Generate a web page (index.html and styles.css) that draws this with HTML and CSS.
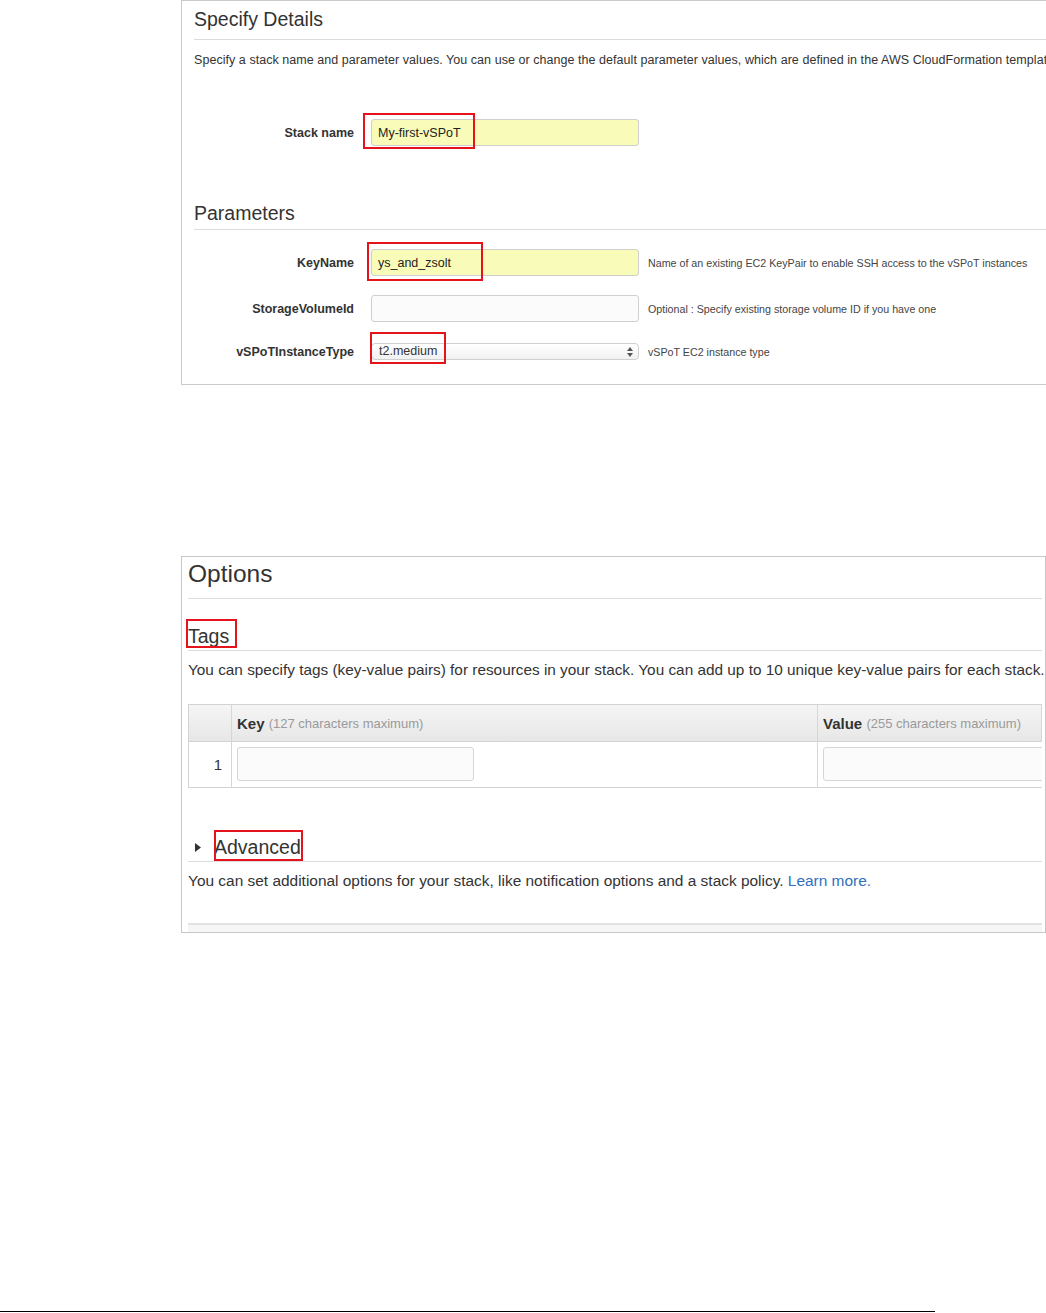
FILE: index.html
```html
<!DOCTYPE html>
<html>
<head>
<meta charset="utf-8">
<title>Stack details</title>
<link rel="stylesheet" href="styles.css">
</head>
<body>
<div class="page">
  <section class="panel details">
    <h2 class="panel-title">Specify Details</h2>
    <p class="desc">Specify a stack name and parameter values. You can use or change the default parameter values, which are defined in the AWS CloudFormation template.</p>
    <div class="row stack-row">
      <div class="label">Stack name</div>
      <div class="field yellow mark mark-stack">My-first-vSPoT</div>
    </div>
    <h2 class="panel-title params">Parameters</h2>
    <div class="row">
      <div class="label">KeyName</div>
      <div class="field yellow mark mark-key">ys_and_zsolt</div>
      <div class="help">Name of an existing EC2 KeyPair to enable SSH access to the vSPoT instances</div>
    </div>
    <div class="row">
      <div class="label">StorageVolumeId</div>
      <div class="field"></div>
      <div class="help">Optional : Specify existing storage volume ID if you have one</div>
    </div>
    <div class="row row-select">
      <div class="label">vSPoTInstanceType</div>
      <div class="field select mark mark-sel">
        <span>t2.medium</span>
        <svg class="updown" width="6" height="10" viewBox="0 0 6 10"><polygon points="3,0 6,4 0,4" fill="#555"/><polygon points="0,6 6,6 3,10" fill="#555"/></svg>
      </div>
      <div class="help">vSPoT EC2 instance type</div>
    </div>
  </section>

  <section class="panel options">
    <h2 class="opt-title">Options</h2>
    <h3 class="sub-title"><span class="tag-mark">Tags</span></h3>
    <p class="opt-desc">You can specify tags (key-value pairs) for resources in your stack. You can add up to 10 unique key-value pairs for each stack.</p>
    <div class="tag-table">
      <div class="cell head"></div>
      <div class="cell head th"><b>Key</b>&nbsp;<span class="hint">(127 characters maximum)</span></div>
      <div class="cell head th"><b>Value</b>&nbsp;<span class="hint">(255 characters maximum)</span></div>
      <div class="cell num">1</div>
      <div class="cell td"><div class="tag-input"></div></div>
      <div class="cell td clip"><div class="tag-input"></div></div>
    </div>
    <h3 class="sub-title adv">
      <svg class="caret" width="6" height="9" viewBox="0 0 6 9"><polygon points="0,0 6,4.5 0,9" fill="#333"/></svg><span class="adv-mark">Advanced</span>
    </h3>
    <p class="opt-desc adv-desc">You can set additional options for your stack, like notification options and a stack policy. <a class="link" href="#">Learn more.</a></p>
    <div class="band"></div>
  </section>
</div>
<div class="footer-rule"></div>
</body>
</html>
```

FILE: styles.css
```css
html, body {
  margin: 0;
  padding: 0;
  overflow: hidden;
  background: #fff;
}

body {
  font-family: "Liberation Sans", Arial, Helvetica, sans-serif;
  color: #333;
}

.page {
  padding-left: 181px;
}

/* ---------- Specify Details panel ---------- */
.details {
  width: 900px;
  border: 1px solid #cacaca;
  border-right: none;
  padding: 6px 0 24px 12px;
}

.panel-title {
  margin: 0;
  font-size: 19.5px;
  font-weight: normal;
  line-height: 24px;
  padding-bottom: 8px;
  border-bottom: 1px solid #dcdcdc;
  color: #333;
}

.panel-title.params {
  margin-top: 55px;
  padding-bottom: 4px;
}

.desc {
  margin: 12px 0 0;
  font-size: 12.5px;
  line-height: 16px;
  white-space: nowrap;
  letter-spacing: 0.05px;
  color: #333;
}

.row {
  display: flex;
  align-items: center;
  margin-top: 19px;
}

.stack-row {
  margin-top: 51px;
}

.row-select {
  margin-top: 21px;
}

.label {
  width: 160px;
  margin-right: 17px;
  padding-top: 1px;
  text-align: right;
  font-size: 12.5px;
  font-weight: bold;
  color: #333;
}

.field {
  position: relative;
  box-sizing: border-box;
  width: 268px;
  height: 27px;
  border: 1px solid #cfcfcf;
  border-radius: 3px;
  padding-left: 6px;
  padding-top: 1px;
  font-size: 12.5px;
  line-height: 25px;
  color: #222;
  background: #fbfbfb;
}

.yellow {
  background: #f9fbb9;
}

.select {
  height: 17px;
  line-height: 15px;
  border-radius: 4px;
  padding-top: 0;
  padding-left: 7px;
  background: linear-gradient(#ffffff, #f1f1f1);
  color: #333;
  display: flex;
  align-items: center;
  justify-content: space-between;
  padding-right: 5px;
}

.updown {
  display: block;
}

.help {
  margin-left: 9px;
  font-size: 10.7px;
  color: #444;
  white-space: nowrap;
}

/* red annotation boxes */
.mark::after {
  content: "";
  position: absolute;
  box-sizing: border-box;
  border: 2px solid #e5131c;
}

.mark-stack::after {
  left: -9px;
  top: -7px;
  width: 112px;
  height: 36px;
}

.mark-key::after {
  left: -5px;
  top: -8px;
  width: 116px;
  height: 39px;
}

.mark-sel::after {
  left: -2px;
  top: -12px;
  width: 76px;
  height: 32px;
}

/* ---------- Options panel ---------- */
.options {
  margin-top: 171px;
  width: 865px;
  box-sizing: border-box;
  border: 1px solid #c6c6c6;
  padding: 2px 3px 0 6px;
  overflow: hidden;
}

.opt-title {
  margin: 0;
  font-size: 24.5px;
  font-weight: normal;
  line-height: 30px;
  padding-bottom: 9px;
  border-bottom: 1px solid #dcdcdc;
  color: #333;
}

.sub-title {
  margin: 25px 0 0;
  font-size: 19.5px;
  font-weight: normal;
  line-height: 24px;
  padding-bottom: 2px;
  border-bottom: 1px solid #dcdcdc;
  color: #333;
}

.tag-mark,
.adv-mark {
  position: relative;
  display: inline-block;
  line-height: 24px;
}

.tag-mark::after,
.adv-mark::after {
  content: "";
  position: absolute;
  box-sizing: border-box;
  border: 2px solid #e5131c;
}

.tag-mark::after {
  left: -2px;
  top: -5px;
  width: 51px;
  height: 29px;
}

.sub-title.adv {
  margin-top: 47px;
  padding-bottom: 2px;
  display: flex;
  align-items: center;
}

.caret {
  display: block;
  margin-left: 7px;
  margin-right: 13px;
}

.adv-mark::after {
  left: 0;
  top: -5px;
  width: 89px;
  height: 31px;
}

.opt-desc {
  margin: 10px 0 0;
  font-size: 15.35px;
  line-height: 18px;
  white-space: nowrap;
  color: #333;
}

.adv-desc {
  font-size: 15.45px;
}

.link {
  color: #2f6fc0;
  text-decoration: none;
}

/* tags table */
.tag-table {
  margin-top: 25px;
  display: grid;
  grid-template-columns: 43px 586px 1fr;
  grid-template-rows: 37px 46px;
  border-top: 1px solid #d3d3d3;
  border-left: 1px solid #d3d3d3;
}

.cell {
  box-sizing: border-box;
  border-right: 1px solid #d6d6d6;
  border-bottom: 1px solid #d3d3d3;
  min-width: 0;
}

.head {
  background: linear-gradient(#f5f5f5, #e7e7e7);
}

.th {
  display: flex;
  align-items: center;
  padding-left: 5px;
  font-size: 15px;
  white-space: nowrap;
  color: #333;
}

.th b {
  font-weight: bold;
}

.hint {
  font-size: 13px;
  color: #9a9a9a;
}

.num {
  display: flex;
  align-items: center;
  justify-content: flex-end;
  padding-right: 9px;
  font-size: 15px;
  color: #333;
}

.td {
  padding: 5px 0 0 5px;
}

.clip {
  overflow: hidden;
  border-right: none;
}

.tag-input {
  box-sizing: border-box;
  width: 237px;
  height: 34px;
  border: 1px solid #d6d6d6;
  border-radius: 3px;
  background: #fbfbfb;
}

.band {
  margin-top: 33px;
  height: 7px;
  border-top: 2px solid #e2e2e2;
  background: #f6f6f6;
}

.footer-rule {
  margin-top: 378px;
  width: 935px;
  height: 1px;
  background: #000;
}
```
